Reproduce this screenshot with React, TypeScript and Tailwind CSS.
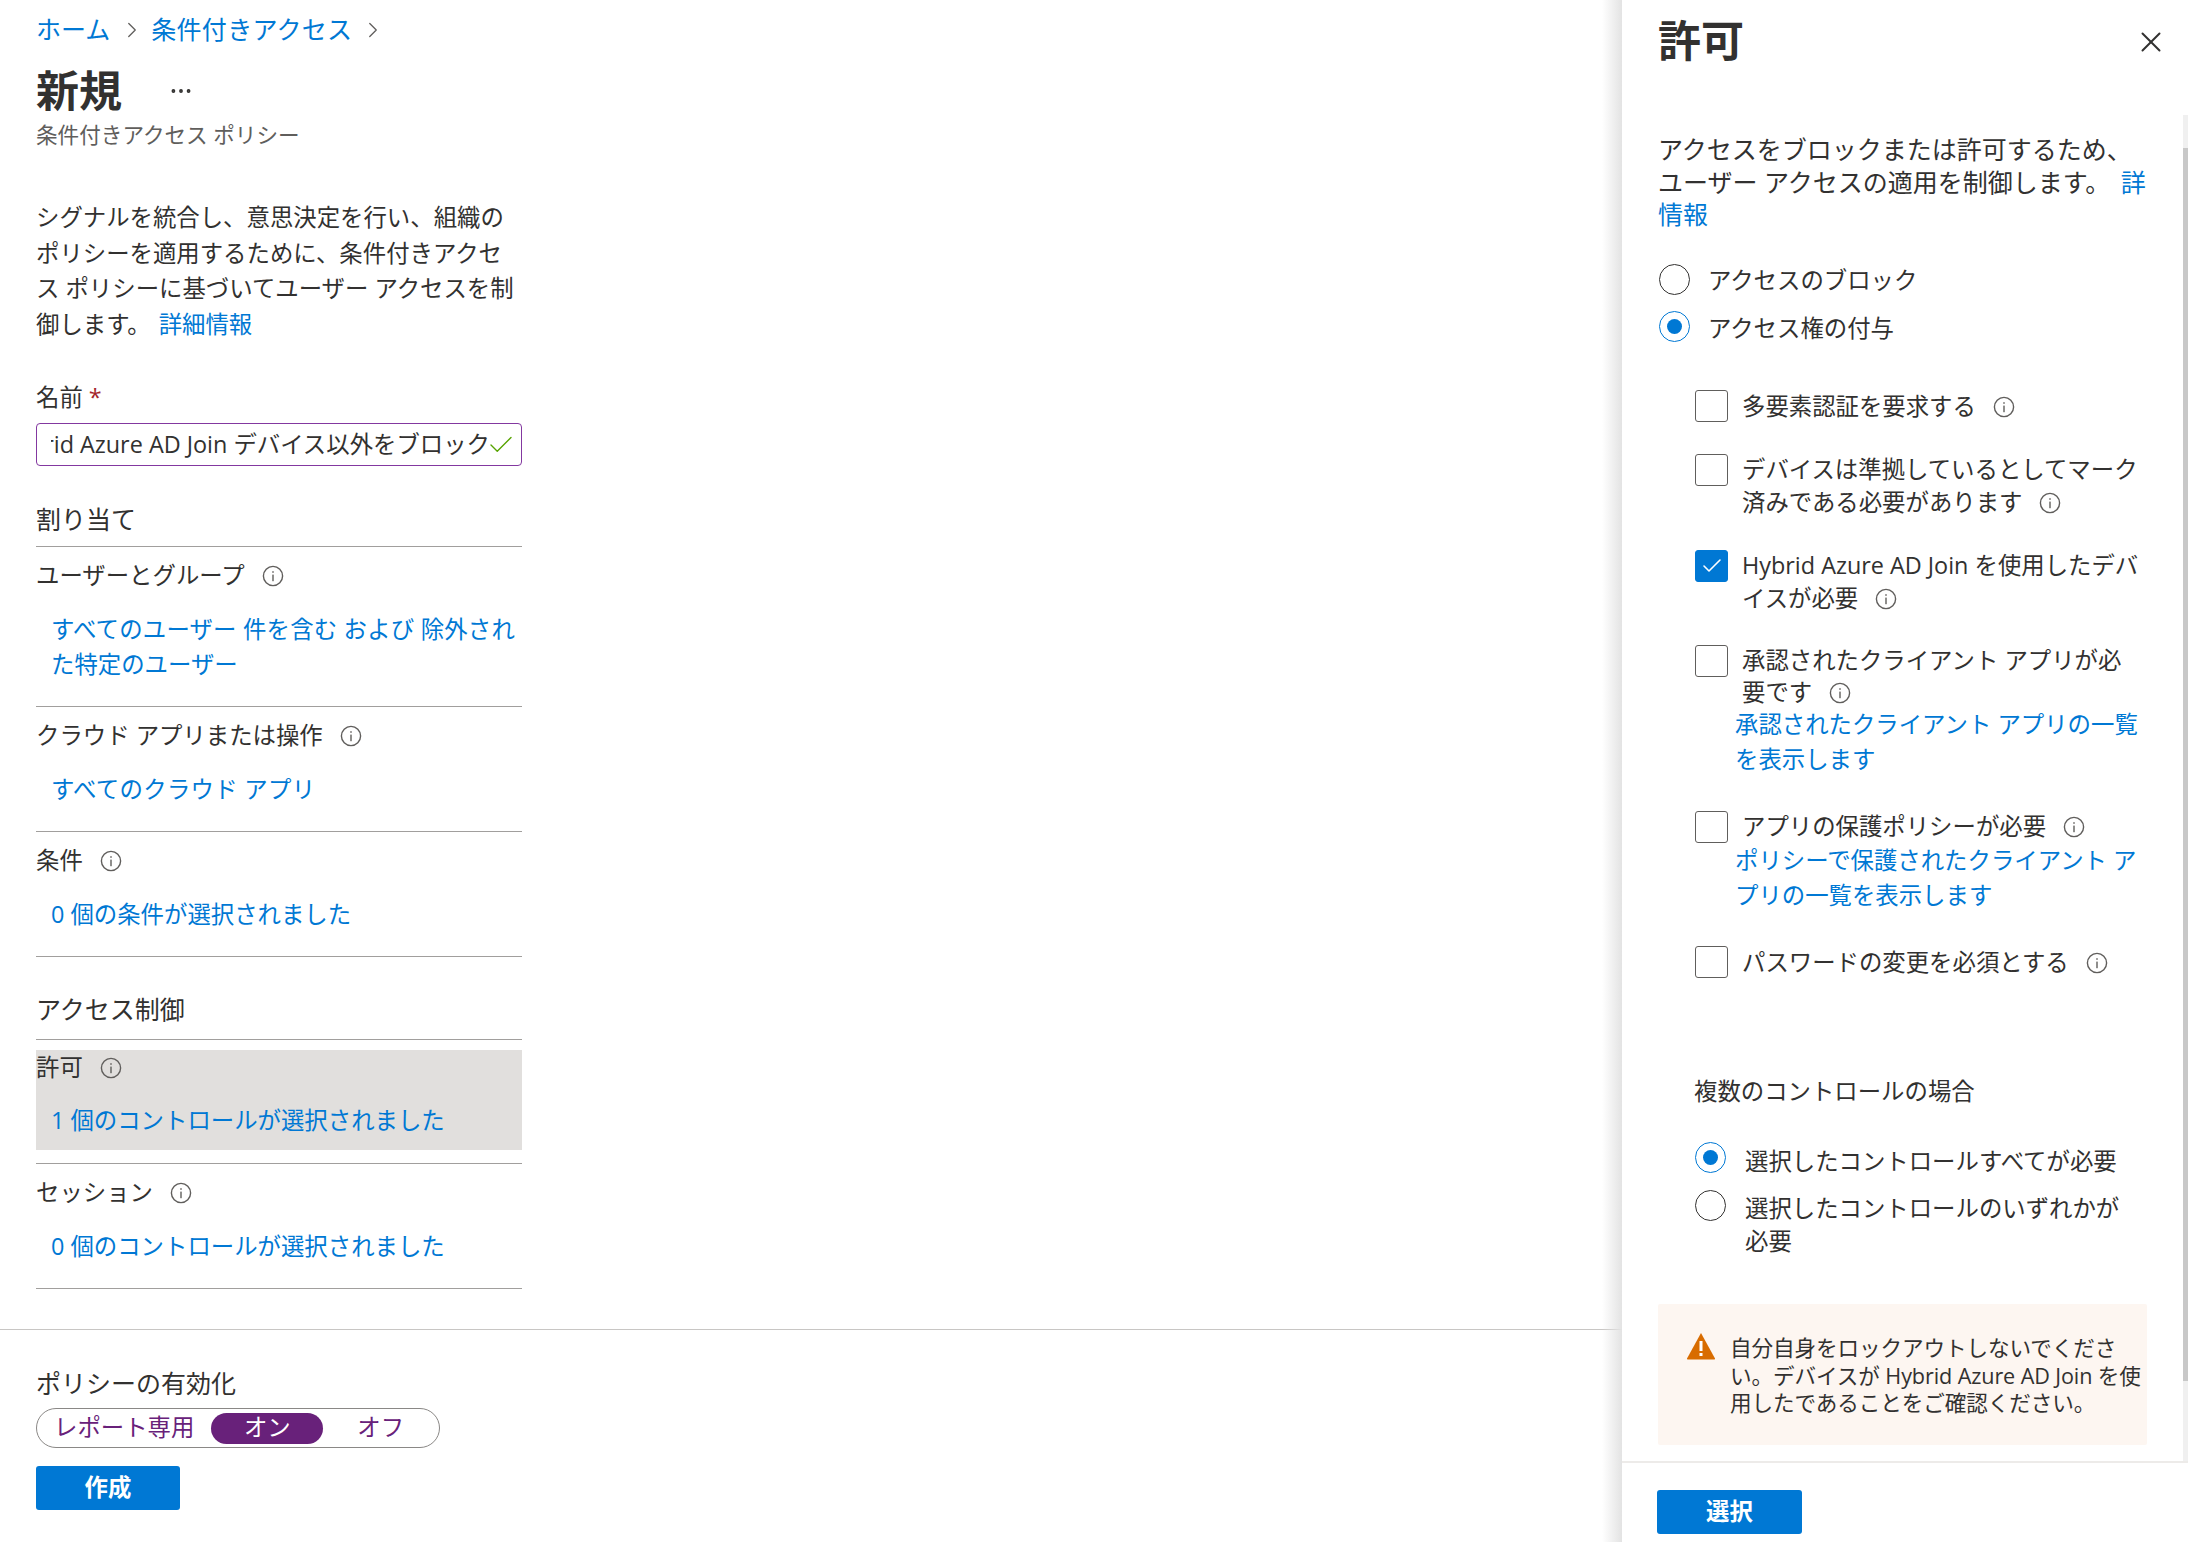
import React from "react";
import { Check, ChevronRight, Ellipsis, X } from "lucide-react";

const InfoIcon = ({ className = "" }: { className?: string }) => (
    <svg width="22" height="22" viewBox="0 0 22 22" fill="none" className={`shrink-0 ${className}`}>
        <circle cx="11" cy="11" r="9.6" stroke="#605e5c" strokeWidth="1.4" />
        <rect x="10.3" y="9.6" width="1.4" height="6.6" fill="#605e5c" />
        <rect x="10.3" y="6.2" width="1.4" height="1.6" fill="#605e5c" />
    </svg>
);

const Radio = ({ checked, className = "" }: { checked?: boolean; className?: string }) => (
    <span className={`flex h-[31px] w-[31px] shrink-0 items-center justify-center rounded-full border ${checked ? "border-[#0078d4]" : "border-[#323130]"} ${className}`}>
        {checked && <span className="h-[15px] w-[15px] rounded-full bg-[#0078d4]" />}
    </span>
);

const Box = ({ checked }: { checked?: boolean }) => (
    <span className={`mt-[0.5px] flex h-[32px] w-[33px] shrink-0 items-center justify-center rounded-[3px] border ${checked ? "border-[#0078d4] bg-[#0078d4]" : "border-[#605e5c] bg-white"}`}>
        {checked && <Check size={24} strokeWidth={1.6} className="text-white" />}
    </span>
);

const Section = ({ label, children }: { label: string; children: React.ReactNode }) => (
    <div className="border-b border-[#a19f9d] pt-[14px] pb-[24px]">
        <div className="flex h-[30px] items-center gap-[17px]">
            {label} <InfoIcon />
        </div>
        <div className="mt-[21px] pl-[15px] leading-[35px] whitespace-nowrap text-[#0078d4]">{children}</div>
    </div>
);

const CheckRow = ({ checked, className = "", children }: { checked?: boolean; className?: string; children: React.ReactNode }) => (
    <div className={`flex gap-[14px] pl-[37px] ${className}`}>
        <Box checked={checked} />
        <div className="leading-[32.5px] whitespace-nowrap">{children}</div>
    </div>
);

const Inline = ({ children }: { children: React.ReactNode }) => (
    <span className="inline-flex items-center gap-[17px] align-top">{children}</span>
);

const App = () => {
    return (
        <div className="h-[1558px] w-[2210px] overflow-hidden bg-white text-[23.4px] text-[#323130] font-['Open_Sans','Noto_Sans_CJK_JP',sans-serif]">
            <div className="flex h-[1542px]">
                {/* blade */}
                <div className="flex w-[1622px] shrink-0 flex-col">
                    <div className="w-[522px] pl-[36px]">
                        <div className="flex h-[60px] items-center gap-[9px] text-[25px] text-[#0078d4]">
                            <span>ホーム</span>
                            <ChevronRight size={26} strokeWidth={1.2} className="text-[#605e5c]" />
                            <span className="-ml-[3px] whitespace-nowrap tracking-[0.3px]">条件付きアクセス</span>
                            <ChevronRight size={26} strokeWidth={1.2} className="-ml-[1px] text-[#605e5c]" />
                        </div>
                        <div className="flex h-[62px] items-center">
                            <h1 className="text-[43px] font-bold">新規</h1>
                            <Ellipsis size={26} strokeWidth={1.5} className="ml-[46px] text-[#323130]" />
                        </div>
                        <div className="h-[26px] text-[21.6px] leading-[26px] whitespace-nowrap text-[#605e5c]">条件付きアクセス ポリシー</div>

                        <p className="mt-[52px] leading-[35.5px] whitespace-nowrap">
                            シグナルを統合し、意思決定を行い、組織の<br />
                            ポリシーを適用するために、条件付きアクセ<br />
                            ス ポリシーに基づいてユーザー アクセスを制<br />
                            御します。 <span className="ml-[2px] text-[#0078d4]">詳細情報</span>
                        </p>

                        <div className="mt-[40px] h-[30px] leading-[30px]">
                            名前 <span className="text-[#a4262c]">*</span>
                        </div>
                        <div className="mt-[11px] flex h-[43px] items-center overflow-hidden rounded-[4px] border-[1.5px] border-[#8338a0] pr-[5px] pl-[14px]">
                            <div className="flex min-w-0 flex-1 justify-end overflow-hidden whitespace-nowrap">
                                <span className="shrink-0">Hybrid Azure AD Join デバイス以外をブロック</span>
                            </div>
                            <Check size={30} strokeWidth={1.1} className="-ml-[4px] shrink-0 text-[#57a300]" />
                        </div>

                        <div className="mt-[36px] h-[34px] text-[25px] leading-[34px]">割り当て</div>
                        <div className="mt-[10px] border-b border-[#a19f9d]" />
                        <Section label="ユーザーとグループ">
                            <span className="tracking-[0.2px]">すべてのユーザー 件を含む および 除外され</span><br />
                            た特定のユーザー
                        </Section>
                        <Section label="クラウド アプリまたは操作">
                            <span className="tracking-[0.3px]">すべてのクラウド アプリ</span>
                        </Section>
                        <Section label="条件">0 個の条件が選択されました</Section>

                        <div className="mt-[35px] h-[34px] text-[25px] leading-[34px]">アクセス制御</div>
                        <div className="mt-[13px] border-b border-[#a19f9d]" />
                        <div className="mt-[10px] h-[100px] bg-[#e1dfdd] pt-[3px]">
                            <div className="flex h-[30px] items-center gap-[17px]">
                                許可 <InfoIcon />
                            </div>
                            <div className="mt-[20px] pl-[15px] leading-[35px] text-[#0078d4]">1 個のコントロールが選択されました</div>
                        </div>
                        <div className="mt-[13px] border-b border-[#a19f9d]" />
                        <Section label="セッション">0 個のコントロールが選択されました</Section>
                    </div>

                    <div className="mt-[40px] border-t border-[#c8c6c4] pl-[36px]">
                        <div className="mt-[38px] h-[30px] text-[25px] leading-[30px]">ポリシーの有効化</div>
                        <div className="mt-[10px] flex h-[40px] w-[404px] items-center rounded-full border border-[#8a8886] text-[#68217a]">
                            <span className="ml-[17px] whitespace-nowrap">レポート専用</span>
                            <span className="ml-[17px] flex h-[31px] w-[112px] items-center justify-center rounded-full bg-[#68217a] text-white">オン</span>
                            <span className="ml-[34px]">オフ</span>
                        </div>
                        <button className="mt-[18px] h-[44px] w-[144px] rounded-[3px] bg-[#0078d4] text-[23.4px] font-bold text-white">作成</button>
                    </div>
                </div>

                {/* grant panel */}
                <div className="relative flex w-[566px] shrink-0 flex-col bg-white">
                    <div className="absolute top-0 right-full h-full w-[20px] bg-gradient-to-r from-transparent to-[#e3e3e3]" />

                    <div className="flex h-[115px] shrink-0 items-start justify-between pt-[14px] pr-[20px] pl-[36px]">
                        <h2 className="text-[43px] leading-[54px] font-bold">許可</h2>
                        <X size={34} strokeWidth={1.4} className="mt-[11px] text-[#323130]" />
                    </div>

                    <div className="relative h-[1346px] shrink-0 pt-[18px] pl-[36px]">
                        {/* scrollbar */}
                        <div className="absolute top-0 right-0 h-full w-[5px] bg-[#f0f0f0]">
                            <div className="mt-[33px] h-[1233px] bg-[#c8c8c8]" />
                        </div>

                        <p className="text-[25px] leading-[32.5px] whitespace-nowrap">
                            アクセスをブロックまたは許可するため、<br />
                            ユーザー アクセスの適用を制御します。 <span className="ml-[4px] text-[#0078d4]">詳</span><br />
                            <span className="text-[#0078d4]">情報</span>
                        </p>

                        <div className="mt-[33px] flex h-[34px] items-center gap-[18px] pl-[1px]">
                            <Radio className="-mt-[2px]" />
                            アクセスのブロック
                        </div>
                        <div className="mt-[14px] flex h-[34px] items-center gap-[18px] pl-[1px]">
                            <Radio checked className="-mt-[4px]" />
                            アクセス権の付与
                        </div>

                        <CheckRow className="mt-[44px]">
                            <Inline>
                                多要素認証を要求する <InfoIcon className="mt-[2px]" />
                            </Inline>
                        </CheckRow>
                        <CheckRow className="mt-[31px]">
                            デバイスは準拠しているとしてマーク<br />
                            <Inline>
                                済みである必要があります <InfoIcon className="mt-[2px]" />
                            </Inline>
                        </CheckRow>
                        <CheckRow checked className="mt-[31px]">
                            Hybrid Azure AD Join を使用したデバ<br />
                            <Inline>
                                イスが必要 <InfoIcon className="mt-[2px]" />
                            </Inline>
                        </CheckRow>
                        <CheckRow className="mt-[30px]">
                            承認されたクライアント アプリが必<br />
                            <div className="-mt-[1px]">
                                <Inline>
                                    要です <InfoIcon className="mt-[2px]" />
                                </Inline>
                            </div>
                            <div className="-mt-[1px] -ml-[7px] leading-[35px] text-[#0078d4]">
                                承認されたクライアント アプリの一覧<br />
                                を表示します
                            </div>
                        </CheckRow>
                        <CheckRow className="mt-[33px]">
                            <Inline>
                                アプリの保護ポリシーが必要 <InfoIcon className="mt-[2px]" />
                            </Inline>
                            <div className="-ml-[7px] leading-[35px] text-[#0078d4]">
                                ポリシーで保護されたクライアント ア<br />
                                プリの一覧を表示します
                            </div>
                        </CheckRow>
                        <CheckRow className="mt-[33px]">
                            <Inline>
                                パスワードの変更を必須とする <InfoIcon className="mt-[2px]" />
                            </Inline>
                        </CheckRow>

                        <div className="mt-[97px] pl-[36px] leading-[33px]">複数のコントロールの場合</div>

                        <div className="mt-[36px] flex gap-[19px] pl-[37px] leading-[34px]">
                            <Radio checked className="-mt-[2px]" />
                            <span>選択したコントロールすべてが必要</span>
                        </div>
                        <div className="mt-[14px] flex gap-[19px] pl-[37px] leading-[33px] whitespace-nowrap">
                            <Radio className="-mt-[2px]" />
                            <span>
                                選択したコントロールのいずれかが<br />
                                必要
                            </span>
                        </div>

                        <div className="mt-[46px] flex h-[141px] w-[489px] gap-[14px] rounded-[2px] bg-[#fdf6f1] pt-[30px] pl-[28px] text-[21.6px] leading-[27.5px] whitespace-nowrap">
                            <svg width="30" height="28" viewBox="0 0 30 28" className="-mt-[2px] shrink-0">
                                <path d="M15 1 L29 26.5 Q29.5 27.5 28 27.5 L2 27.5 Q0.5 27.5 1 26.5 Z" fill="#d86c00" />
                                <rect x="13.5" y="9" width="3" height="10" fill="#fff" />
                                <rect x="13.5" y="21" width="3" height="3" fill="#fff" />
                            </svg>
                            <div className="tracking-[-0.1px]">
                                自分自身をロックアウトしないでくださ<br />
                                い。デバイスが Hybrid Azure AD Join を使<br />
                                用したであることをご確認ください。
                            </div>
                        </div>
                    </div>

                    <div className="flex-1 border-t-2 border-[#edebe9] pt-[27px] pl-[35px]">
                        <button className="h-[44px] w-[145px] rounded-[3px] bg-[#0078d4] text-[23.4px] font-bold text-white">選択</button>
                    </div>
                </div>
            </div>
        </div>
    );
};

export default App;
